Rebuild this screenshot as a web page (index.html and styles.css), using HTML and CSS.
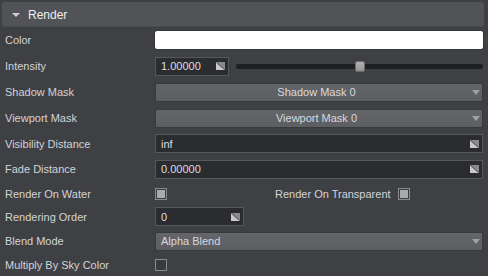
FILE: index.html
```html
<!DOCTYPE html>
<html lang="en">
<head>
  <meta charset="UTF-8">
  <title>Render</title>
  <link rel="stylesheet" href="styles.css">
</head>
<body>
  <div class="panel">
    <!-- Cabecalho -->
    <div class="header">
      <span class="caret"></span>
      <span class="title">Render</span>
    </div>

    <div class="row">
      <div class="label">Color</div>
      <div class="control"><div class="swatch"></div></div>
    </div>

    <div class="row">
      <div class="label">Intensity</div>
      <div class="control">
        <div class="field small">
          <span>1.00000</span>
          <svg class="grip" width="9" height="8" viewBox="0 0 9 8"><path d="M0 0H9V8Z" fill="#8a8a8a"/><path d="M0 0V8H9Z" fill="#c9c9c9"/><path d="M0.5 0.5L8.5 7.5" stroke="#505050" stroke-width="1"/></svg>
        </div>
        <div class="slider">
          <div class="track"></div>
          <div class="thumb"></div>
        </div>
      </div>
    </div>

    <div class="row">
      <div class="label">Shadow Mask</div>
      <div class="control">
        <div class="dropdown center"><span>Shadow Mask 0</span><i class="arrow"></i></div>
      </div>
    </div>

    <div class="row">
      <div class="label">Viewport Mask</div>
      <div class="control">
        <div class="dropdown center"><span>Viewport Mask 0</span><i class="arrow"></i></div>
      </div>
    </div>

    <div class="row tight">
      <div class="label">Visibility Distance</div>
      <div class="control">
        <div class="field">
          <span>inf</span>
          <svg class="grip" width="9" height="8" viewBox="0 0 9 8"><path d="M0 0H9V8Z" fill="#8a8a8a"/><path d="M0 0V8H9Z" fill="#c9c9c9"/><path d="M0.5 0.5L8.5 7.5" stroke="#505050" stroke-width="1"/></svg>
        </div>
      </div>
    </div>

    <div class="row">
      <div class="label">Fade Distance</div>
      <div class="control">
        <div class="field">
          <span>0.00000</span>
          <svg class="grip" width="9" height="8" viewBox="0 0 9 8"><path d="M0 0H9V8Z" fill="#8a8a8a"/><path d="M0 0V8H9Z" fill="#c9c9c9"/><path d="M0.5 0.5L8.5 7.5" stroke="#505050" stroke-width="1"/></svg>
        </div>
      </div>
    </div>

    <div class="row short">
      <div class="label">Render On Water</div>
      <div class="control">
        <div class="check-cell"><span class="checkbox checked"></span></div>
        <span class="inline-label">Render On Transparent</span>
        <span class="checkbox checked"></span>
      </div>
    </div>

    <div class="row short">
      <div class="label">Rendering Order</div>
      <div class="control">
        <div class="field order">
          <span>0</span>
          <svg class="grip" width="9" height="8" viewBox="0 0 9 8"><path d="M0 0H9V8Z" fill="#8a8a8a"/><path d="M0 0V8H9Z" fill="#c9c9c9"/><path d="M0.5 0.5L8.5 7.5" stroke="#505050" stroke-width="1"/></svg>
        </div>
      </div>
    </div>

    <div class="row">
      <div class="label">Blend Mode</div>
      <div class="control">
        <div class="dropdown"><span>Alpha Blend</span><i class="arrow"></i></div>
      </div>
    </div>

    <div class="row last">
      <div class="label">Multiply By Sky Color</div>
      <div class="control"><span class="checkbox"></span></div>
    </div>
  </div>
</body>
</html>
```

FILE: styles.css
```css
/* Estilo geral */
body {
  margin: 0;
  background: #3f4044;
  font-family: 'Liberation Sans', Arial, sans-serif;
  font-size: 11px;
  color: #d2d3d8;
}

.panel {
  width: 488px;
  height: 276px;
  padding-top: 2px;
  box-sizing: border-box;
  overflow: hidden;
}

/* Cabecalho */
.header {
  margin: 0 4px 0 2px;
  height: 25px;
  background: #525357;
  border-radius: 3px;
  display: flex;
  align-items: center;
  box-shadow: inset 0 -1px 0 #4a4b4f;
}

.caret {
  width: 0;
  height: 0;
  margin-left: 10px;
  border-left: 4px solid transparent;
  border-right: 4px solid transparent;
  border-top: 4px solid #cfd0d4;
}

.title {
  margin-left: 8px;
  font-size: 12px;
  color: #eceef2;
}

/* Linhas */
.row {
  height: 26px;
  display: flex;
  align-items: center;
}

.row.tight {
  height: 25px;
}

.row.short {
  height: 23px;
}

.row.last {
  height: 22px;
}

.label {
  width: 150px;
  padding-left: 5px;
  flex-shrink: 0;
}

.control {
  flex: 1;
  margin-right: 5px;
  display: flex;
  align-items: center;
}

.swatch {
  flex: 1;
  height: 18px;
  background: #fff;
  border-radius: 2px;
  box-shadow: 0 0 0 1px #36373a;
}

/* Campos */
.field {
  flex: 1;
  height: 19px;
  box-sizing: border-box;
  background: #2b2c2f;
  border: 1px solid #57585c;
  display: flex;
  align-items: center;
  padding: 0 3px 0 5px;
  color: #dcdde1;
}

.field span {
  flex: 1;
}

.field.small {
  flex: 0 0 74px;
}

.field.order {
  flex: 0 0 89px;
}

.grip {
  display: block;
}

/* Slider */
.slider {
  flex: 1;
  margin-left: 7px;
  position: relative;
  height: 12px;
  display: flex;
  align-items: center;
}

.track {
  flex: 1;
  height: 5px;
  background: #1f2022;
  border-radius: 2px;
}

.thumb {
  position: absolute;
  left: 119px;
  top: 1px;
  width: 10px;
  height: 11px;
  box-sizing: border-box;
  border-radius: 2px;
  background: linear-gradient(#b4b4b4, #939393);
  border: 1px solid #6a6a6a;
}

/* Dropdowns */
.dropdown {
  flex: 1;
  height: 19px;
  box-sizing: border-box;
  background: linear-gradient(#646569, #5d5e62);
  border: 1px solid #38393c;
  border-radius: 2px;
  display: flex;
  align-items: center;
  padding: 0 2px 0 5px;
  color: #d8d9de;
}

.dropdown span {
  flex: 1;
}

.dropdown.center span {
  text-align: center;
}

.arrow {
  width: 0;
  height: 0;
  border-left: 4px solid transparent;
  border-right: 4px solid transparent;
  border-top: 5px solid #a0a1a5;
}

/* Checkboxes */
.check-cell {
  width: 120px;
  display: flex;
}

.checkbox {
  width: 12px;
  height: 12px;
  box-sizing: border-box;
  border: 1px solid #8a8b8f;
  background: #3a3b3e;
  display: flex;
  align-items: center;
  justify-content: center;
}

.checkbox.checked::after {
  content: "";
  width: 8px;
  height: 8px;
  background: #a9aaad;
}

.inline-label {
  margin-right: 7px;
}
```
